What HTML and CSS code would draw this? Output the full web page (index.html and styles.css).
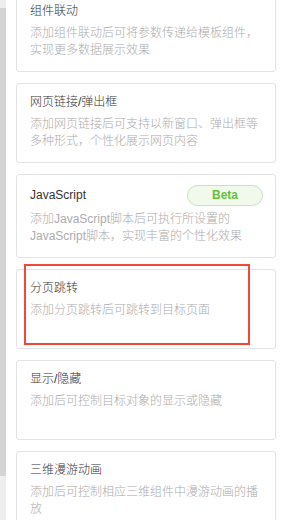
FILE: index.html
```html
<!DOCTYPE html>
<html lang="zh-CN">
<head>
<meta charset="utf-8">
<link rel="stylesheet" href="styles.css">
</head>
<body>
<div class="page">
  <div class="scroll-strip"><div class="scroll-thumb"></div></div>
  <div class="panel">
    <div class="list">
      <div class="card">
        <div class="card-head"><span class="card-title">组件联动</span></div>
        <div class="card-desc">添加组件联动后可将参数传递给模板组件，实现更多数据展示效果</div>
      </div>
      <div class="card">
        <div class="card-head"><span class="card-title">网页链接/弹出框</span></div>
        <div class="card-desc">添加网页链接后可支持以新窗口、弹出框等多种形式，个性化展示网页内容</div>
      </div>
      <div class="card">
        <div class="card-head card-head-badge"><span class="card-title">JavaScript</span><span class="badge">Beta</span></div>
        <div class="card-desc">添加JavaScript脚本后可执行所设置的JavaScript脚本，实现丰富的个性化效果</div>
      </div>
      <div class="card card-marked">
        <div class="card-head"><span class="card-title">分页跳转</span></div>
        <div class="card-desc">添加分页跳转后可跳转到目标页面</div>
        <div class="mark"></div>
      </div>
      <div class="card">
        <div class="card-head"><span class="card-title">显示/隐藏</span></div>
        <div class="card-desc">添加后可控制目标对象的显示或隐藏</div>
      </div>
      <div class="card">
        <div class="card-head"><span class="card-title">三维漫游动画</span></div>
        <div class="card-desc">添加后可控制相应三维组件中漫游动画的播放</div>
      </div>
    </div>
  </div>
</div>
</body>
</html>
```

FILE: styles.css
```css
html, body {
  margin: 0;
  padding: 0;
  background: #ffffff;
  overflow: hidden;
}
body {
  font-family: "Liberation Sans", "Noto Sans CJK SC", sans-serif;
  font-size: 12px;
  color: #333333;
}
.page {
  display: flex;
  height: 520px;
  overflow: hidden;
}
.scroll-strip {
  width: 6px;
  flex: none;
  background: #eeeeee;
}
.scroll-thumb {
  margin-top: 8px;
  height: 468px;
  background: #d4d4d4;
}
.panel {
  flex: 1;
  padding-left: 10px;
  padding-right: 5px;
}
.list {
  margin-top: -8px;
  display: flex;
  flex-direction: column;
  gap: 11px;
}
.card {
  position: relative;
  border: 1px solid #e3e3e3;
  border-radius: 3px;
  padding: 10px 12px 12px 13px;
  background: #ffffff;
}
.card-head {
  display: flex;
  align-items: center;
  justify-content: space-between;
  height: 17px;
  margin-bottom: 5px;
}
.card-head-badge {
  height: 21px;
}
.card-title {
  font-size: 12px;
  line-height: 17px;
  font-weight: 300;
  color: #333333;
}
.badge {
  box-sizing: border-box;
  width: 76px;
  height: 21px;
  border: 1px solid #c2e7b0;
  border-radius: 11px;
  background: #f0f9eb;
  color: #67c23a;
  font-weight: bold;
  font-size: 12px;
  line-height: 19px;
  text-align: center;
}
.card-desc {
  font-size: 12px;
  line-height: 17px;
  min-height: 34px;
  font-weight: 300;
  color: #acacac;
}
.mark {
  position: absolute;
  left: 7px;
  top: -6px;
  width: 222px;
  height: 77px;
  border: 2px solid #f2483a;
  pointer-events: none;
}
```
